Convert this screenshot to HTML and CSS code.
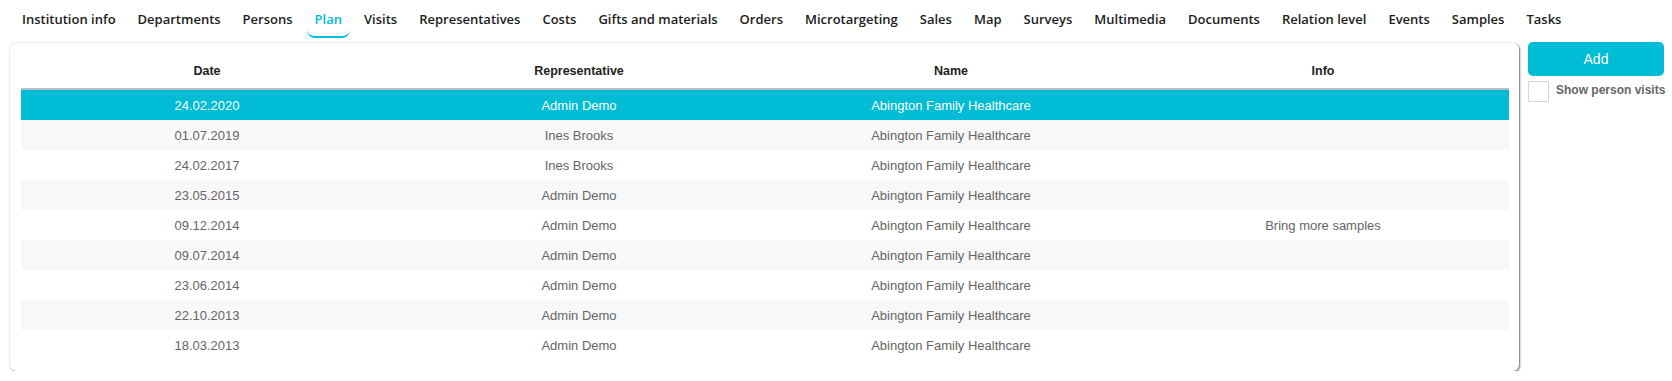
FILE: index.html
```html
<!DOCTYPE html>
<html lang="en">
<head>
    <meta charset="UTF-8">
    <title>Institution - Plan</title>
    <link rel="stylesheet" href="styles.css">
</head>
<body>
    <nav class="tabs">
        <a class="tab">Institution info</a>
        <a class="tab">Departments</a>
        <a class="tab">Persons</a>
        <a class="tab active">Plan</a>
        <a class="tab">Visits</a>
        <a class="tab">Representatives</a>
        <a class="tab">Costs</a>
        <a class="tab">Gifts and materials</a>
        <a class="tab">Orders</a>
        <a class="tab">Microtargeting</a>
        <a class="tab">Sales</a>
        <a class="tab">Map</a>
        <a class="tab">Surveys</a>
        <a class="tab">Multimedia</a>
        <a class="tab">Documents</a>
        <a class="tab">Relation level</a>
        <a class="tab">Events</a>
        <a class="tab">Samples</a>
        <a class="tab">Tasks</a>
    </nav>

    <div class="content">
        <div class="panel">
            <table class="grid">
                <thead>
                    <tr>
                        <th>Date</th>
                        <th>Representative</th>
                        <th>Name</th>
                        <th>Info</th>
                    </tr>
                </thead>
                <tbody>
                    <tr class="selected"><td>24.02.2020</td><td>Admin Demo</td><td>Abington Family Healthcare</td><td></td></tr>
                    <tr><td>01.07.2019</td><td>Ines Brooks</td><td>Abington Family Healthcare</td><td></td></tr>
                    <tr><td>24.02.2017</td><td>Ines Brooks</td><td>Abington Family Healthcare</td><td></td></tr>
                    <tr><td>23.05.2015</td><td>Admin Demo</td><td>Abington Family Healthcare</td><td></td></tr>
                    <tr><td>09.12.2014</td><td>Admin Demo</td><td>Abington Family Healthcare</td><td>Bring more samples</td></tr>
                    <tr><td>09.07.2014</td><td>Admin Demo</td><td>Abington Family Healthcare</td><td></td></tr>
                    <tr><td>23.06.2014</td><td>Admin Demo</td><td>Abington Family Healthcare</td><td></td></tr>
                    <tr><td>22.10.2013</td><td>Admin Demo</td><td>Abington Family Healthcare</td><td></td></tr>
                    <tr><td>18.03.2013</td><td>Admin Demo</td><td>Abington Family Healthcare</td><td></td></tr>
                </tbody>
            </table>
        </div>

        <aside class="side">
            <button class="btn-add">Add</button>
            <label class="check">
                <span class="box"></span>
                <span>Show person visits</span>
            </label>
        </aside>
    </div>
</body>
</html>
```

FILE: styles.css
```css
body {
    margin: 0;
    background: #fff;
    font-family: "Liberation Sans", Arial, sans-serif;
    color: #222;
}

.tabs {
    display: flex;
    gap: 6px;
    padding: 6px 0 0 14px;
    height: 34px;
    box-sizing: border-box;
}
.tab {
    font-family: "Open Sans", "Noto Sans", sans-serif;
    font-size: 13px;
    font-weight: 600;
    color: #1c1c1c;
    padding: 0 8px;
    height: 32px;
    line-height: 26px;
    box-sizing: border-box;
    border-bottom: 2px solid transparent;
    border-radius: 0 0 8px 8px;
    white-space: nowrap;
}
.tab.active {
    color: #00bcd4;
    border-bottom-color: #00bcd4;
}

.content {
    display: flex;
    align-items: flex-start;
    padding: 9px 0 0 10px;
}

.panel {
    width: 1509px;
    height: 328px;
    box-sizing: border-box;
    padding: 11px 10px 0 11px;
    border-radius: 6px;
    background: #fff;
    box-shadow: 1px 1px 2px rgba(0,0,0,0.55), 0 0 2px rgba(0,0,0,0.15);
}

.grid {
    width: 1488px;
    border-collapse: collapse;
    table-layout: fixed;
}
.grid th {
    height: 32px;
    font-size: 12.5px;
    font-weight: bold;
    color: #222;
    border-bottom: 2px solid #b9bfc4;
    text-align: center;
}
.grid td {
    height: 28px;
    text-align: center;
    color: #666;
    font-size: 13px;
}
.grid tbody tr:nth-child(even) { background: #f8f8f8; }
.grid tr.selected { background: #00bcd4; }
.grid tr.selected td { color: #fff; }

.side {
    display: flex;
    flex-direction: column;
    margin-left: 9px;
    margin-top: -1px;
}
.btn-add {
    width: 136px;
    height: 34px;
    border: none;
    border-radius: 5px;
    background: #00bcd4;
    color: #fff;
    font-family: "Liberation Sans", Arial, sans-serif;
    font-size: 14px;
    cursor: pointer;
}
.check {
    display: flex;
    align-items: flex-start;
    gap: 7px;
    margin-top: 5px;
    font-size: 12px;
    font-weight: bold;
    color: #666;
}
.box {
    width: 19px;
    height: 19px;
    border: 1px solid #d6d6d6;
    background: #fff;
    flex: none;
}
.check span:last-child {
    margin-top: 2px;
}
```
